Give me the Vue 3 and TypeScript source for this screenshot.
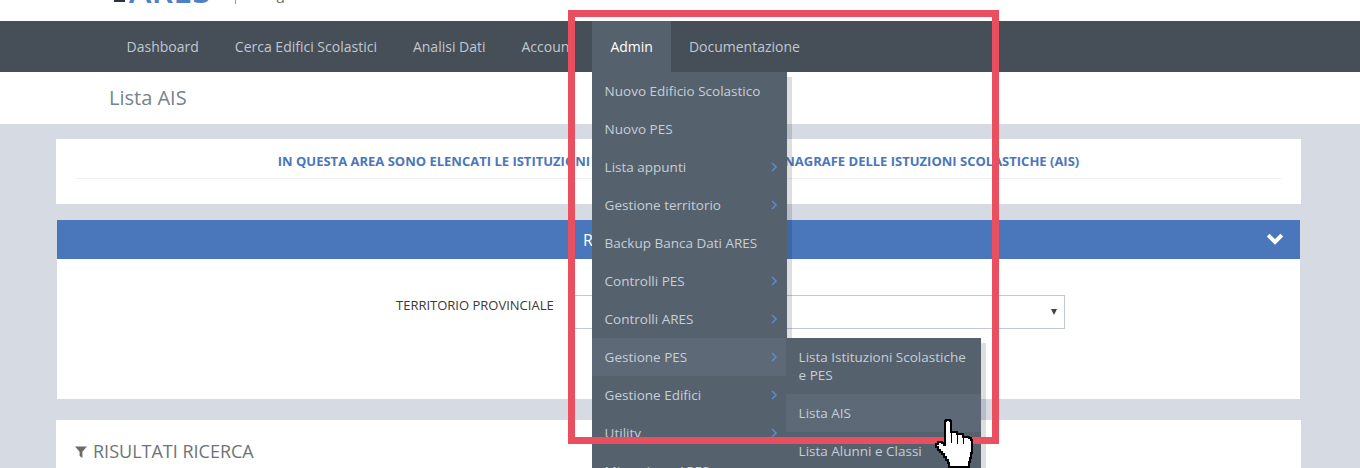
<script setup lang="ts">
const navItems = [
  { label: 'Dashboard', active: false },
  { label: 'Cerca Edifici Scolastici', active: false },
  { label: 'Analisi Dati', active: false },
  { label: 'Account', active: false },
  { label: 'Admin', active: true },
  { label: 'Documentazione', active: false },
]
const menu = [
  { label: 'Nuovo Edificio Scolastico', sub: false, hover: false },
  { label: 'Nuovo PES', sub: false, hover: false },
  { label: 'Lista appunti', sub: true, hover: false },
  { label: 'Gestione territorio', sub: true, hover: false },
  { label: 'Backup Banca Dati ARES', sub: false, hover: false },
  { label: 'Controlli PES', sub: true, hover: false },
  { label: 'Controlli ARES', sub: true, hover: false },
  { label: 'Gestione PES', sub: true, hover: true },
  { label: 'Gestione Edifici', sub: true, hover: false },
  { label: 'Utility', sub: true, hover: false },
  { label: 'Migrazione ARES', sub: false, hover: false },
]
const submenu = [
  { label: 'Lista Istituzioni Scolastiche e PES', hover: false },
  { label: 'Lista AIS', hover: true },
  { label: 'Lista Alunni e Classi', hover: false },
]
</script>

<template>
  <div class="page">
    <header class="top">
      <div class="logo">
        <i class="logo-mark"></i>
        <span class="logo-text">ARES</span>
        <i class="logo-bar"></i>
        <span class="logo-sub">a</span>
      </div>
    </header>
    <nav class="nav">
      <a v-for="n in navItems" :key="n.label" class="nav-item" :class="{ active: n.active }">{{ n.label }}</a>
    </nav>
    <div class="title-bar">Lista AIS</div>
    <main class="content">
      <section class="card notice">
        <p class="notice-text">IN QUESTA AREA SONO ELENCATI LE ISTITUZIONI SCOLASTICHE CENSITE NELL'ANAGRAFE DELLE ISTUZIONI SCOLASTICHE (AIS)</p>
      </section>
      <section class="panel">
        <div class="panel-head">
          <span class="panel-title">RICERCA</span>
          <svg class="chevron" viewBox="0 0 18 14" width="18" height="14">
            <path d="M2.2 3.2 9 10 15.8 3.2" fill="none" stroke="#fff" stroke-width="4" />
          </svg>
        </div>
        <div class="panel-body">
          <label class="field-label">TERRITORIO PROVINCIALE</label>
          <div class="select"><span class="select-arrow"></span></div>
        </div>
      </section>
      <section class="card results">
        <svg class="funnel" viewBox="0 0 12 12" width="12" height="12">
          <path d="M0 .5h12L7.4 5.8V12L4.6 10V5.8z" fill="#6b6b6b" />
        </svg>
        <span>RISULTATI RICERCA</span>
      </section>
    </main>

    <div class="dropdown">
      <div v-for="m in menu" :key="m.label" class="menu-item" :class="{ hover: m.hover }">
        <span>{{ m.label }}</span>
        <svg v-if="m.sub" class="caret" viewBox="0 0 6 10" width="6" height="10">
          <path d="M1 1l4 4-4 4" fill="none" stroke="#5b8fd0" stroke-width="1.4" />
        </svg>
      </div>
    </div>
    <div class="submenu">
      <div v-for="s in submenu" :key="s.label" class="sub-item" :class="{ hover: s.hover }">{{ s.label }}</div>
    </div>

    <div class="annotation"></div>

    <svg class="cursor" viewBox="0 0 38 50" width="38" height="50" shape-rendering="crispEdges">
      <path d="M10 2H11V1H15V2H16V13H22V15H28V18H34V19H36V21H37V34H36V39H35V43H34V48H14V44H13V41H11V38H9V35H7V33H5V31H3V28H1V25H3V23H7V24H9V26H10Z" fill="#fff" stroke="#000" stroke-width="2" />
      <path d="M16.5 13V24M22.5 15V25M28.5 18V25" fill="none" stroke="#000" stroke-width="1" />
    </svg>
  </div>
</template>

<style>
html, body { margin: 0; padding: 0; overflow: hidden; }
</style>

<style scoped>
.page {
  position: relative;
  width: 1360px;
  height: 468px;
  overflow: hidden;
  background: #d5dae3;
  font-family: "Open Sans", "Noto Sans", sans-serif;
  font-size: 14px;
}
.top {
  height: 21px;
  background: #fff;
  padding-left: 114px;
  box-sizing: border-box;
  overflow: hidden;
}
.logo {
  display: flex;
  align-items: flex-start;
  height: 21px;
}
.logo-mark {
  width: 11px;
  height: 2px;
  background: #2b3240;
}
.logo-text {
  margin: -27px 0 0 4px;
  width: 106px;
  font-size: 34px;
  font-weight: 600;
  color: #4f7fcb;
  line-height: 34px;
}
.logo-bar {
  width: 1px;
  height: 4px;
  background: #9a9a9a;
}
.logo-sub {
  margin: -11px 0 0 40px;
  font-size: 16px;
  color: #777;
  line-height: 16px;
}
.nav {
  display: flex;
  height: 51px;
  padding-left: 108.6px;
  background: #464e58;
}
.nav-item {
  padding: 0 18px;
  line-height: 51px;
  color: #c0c8d0;
  font-size: 14px;
}
.nav-item.active {
  background: #56616e;
  color: #fff;
}
.title-bar {
  height: 52px;
  padding-left: 109px;
  background: #fff;
  color: #76838a;
  font-size: 20px;
  font-weight: 400;
  line-height: 52px;
}
.content {
  display: flex;
  flex-direction: column;
  padding: 15px 60px 0 57px;
}
.card {
  background: #fff;
  margin-left: -1px;
  margin-right: -1px;
}
.notice {
  height: 65px;
  padding: 0 20px;
  box-sizing: border-box;
}
.notice-text {
  margin: 0;
  height: 39px;
  border-bottom: 1px solid #eef0f3;
  color: #4a76bc;
  font-size: 13px;
  font-weight: 700;
  line-height: 45px;
  text-align: center;
  white-space: nowrap;
}
.panel {
  margin-top: 16px;
  background: #fff;
  height: 179px;
}
.panel-head {
  display: flex;
  align-items: center;
  position: relative;
  height: 39px;
  padding-left: 526px;
  background: #4a76bc;
  color: #fff;
  font-size: 16px;
}
.chevron { position: absolute; right: 16px; top: 12px; }
.panel-body {
  position: relative;
  display: flex;
  padding-top: 36px;
  padding-left: 339px;
}
.field-label {
  width: 220px;
  color: #3a3a3a;
  font-size: 13px;
  line-height: 20px;
}
.select {
  position: absolute;
  left: 512px;
  right: 235px;
  top: 36px;
  height: 32px;
  border: 1px solid #c3cad5;
  background: #fff;
}
.select-arrow {
  position: absolute;
  right: 7px;
  top: 13px;
  width: 0;
  height: 0;
  border-left: 3px solid transparent;
  border-right: 3px solid transparent;
  border-top: 6px solid #444;
}
.results {
  margin-top: 21px;
  height: 60px;
  box-sizing: border-box;
  padding: 19px 0 0 19px;
  color: #6d7377;
  font-size: 18px;
  line-height: 24px;
  display: flex;
  align-items: flex-start;
  gap: 6px;
}
.funnel { margin-top: 7px; }
.dropdown {
  position: absolute;
  left: 592px;
  top: 72px;
  width: 195px;
  background: #56616e;
  box-shadow: 5px 5px 0 rgba(0, 0, 0, 0.13);
}
.menu-item {
  display: flex;
  align-items: center;
  justify-content: space-between;
  height: 38px;
  padding: 0 10px 0 12.6px;
  color: #c6ced6;
  font-size: 13.5px;
}
.menu-item.hover { background: #5d6977; }
.caret { flex: none; }
.submenu {
  position: absolute;
  left: 786px;
  top: 338px;
  width: 195px;
  background: #56616e;
  box-shadow: 5px 5px 0 rgba(0, 0, 0, 0.13);
}
.sub-item {
  padding: 10px 12.6px;
  color: #c6ced6;
  font-size: 13.5px;
  line-height: 18px;
}
.sub-item.hover { background: #5d6977; }
.annotation {
  position: absolute;
  left: 568px;
  top: 10px;
  width: 431px;
  height: 434px;
  box-sizing: border-box;
  border: 7px solid #e94f5e;
}
.cursor {
  position: absolute;
  left: 935px;
  top: 419px;
}
</style>
